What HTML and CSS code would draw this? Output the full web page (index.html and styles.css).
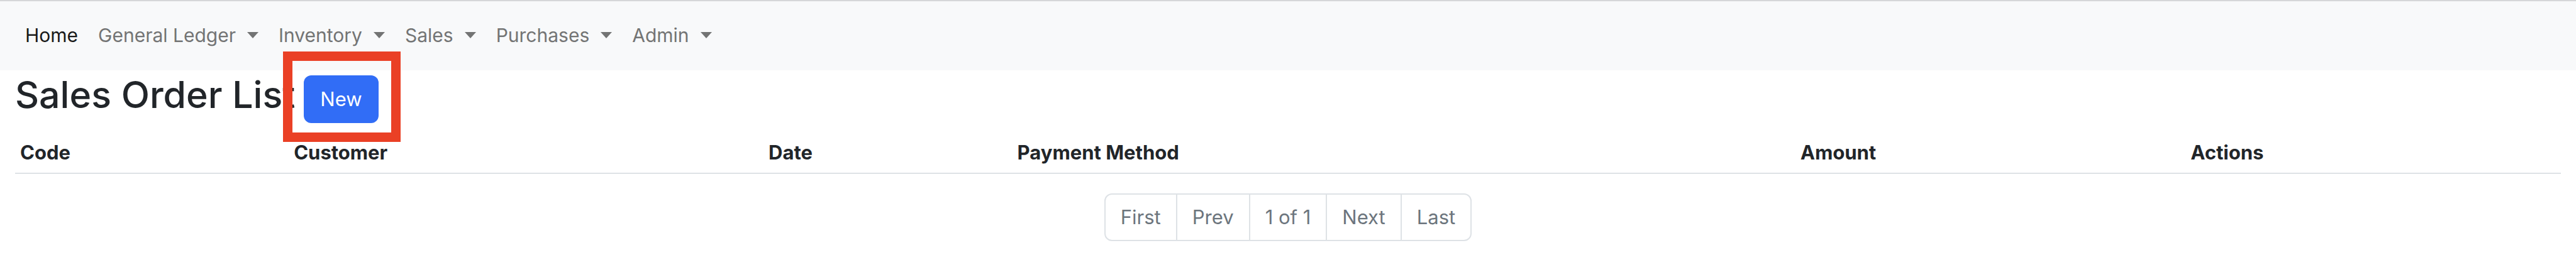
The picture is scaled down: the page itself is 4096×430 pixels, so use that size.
FILE: index.html
```html
<!DOCTYPE html>
<html lang="en">
<head>
<meta charset="utf-8">
<title>Sales Order List</title>
<link rel="stylesheet" href="styles.css">
</head>
<body>
<nav class="navbar">
  <ul class="nav-list">
    <li><a class="nav-link active" href="#">Home</a></li>
    <li><a class="nav-link dropdown" href="#">General Ledger</a></li>
    <li><a class="nav-link dropdown" href="#">Inventory</a></li>
    <li><a class="nav-link dropdown" href="#">Sales</a></li>
    <li><a class="nav-link dropdown" href="#">Purchases</a></li>
    <li><a class="nav-link dropdown" href="#">Admin</a></li>
  </ul>
</nav>
<main class="container">
  <div class="title-row">
    <h2 class="title">Sales Order List</h2>
    <div class="highlight"><button class="btn" type="button">New</button></div>
  </div>
  <table class="table">
    <thead>
      <tr>
        <th class="col-code" scope="col">Code</th>
        <th class="col-customer" scope="col">Customer</th>
        <th class="col-date" scope="col">Date</th>
        <th class="col-payment" scope="col">Payment Method</th>
        <th class="col-amount" scope="col">Amount</th>
        <th class="col-actions" scope="col">Actions</th>
      </tr>
    </thead>
  </table>
  <ul class="pagination">
    <li><a class="page-link" href="#">First</a></li>
    <li><a class="page-link" href="#">Prev</a></li>
    <li><a class="page-link" href="#">1 of 1</a></li>
    <li><a class="page-link" href="#">Next</a></li>
    <li><a class="page-link" href="#">Last</a></li>
  </ul>
</main>
</body>
</html>
```
FILE: styles.css
```css
* { box-sizing: border-box; }
body {
  margin: 0;
  background: #fff;
  color: #212529;
  font-family: Inter, "Liberation Sans", sans-serif;
  font-size: 31px;
  line-height: 48px;
}
.navbar {
  padding: 14px 24px 16px;
  border-top: 2px solid #d5d6d8;
  background: #f8f9fa;
  font-size: 30px;
}
.nav-list, .pagination {
  display: flex;
  margin: 0;
  padding: 0;
  list-style: none;
}
.nav-link {
  display: flex;
  align-items: center;
  gap: 18px;
  padding: 16px;
  color: #737474;
  text-decoration: none;
}
.nav-link.active { color: #191919; }
.dropdown::after {
  content: "";
  border-top: 10px solid;
  border-right: 9px solid transparent;
  border-left: 9px solid transparent;
}
.container { padding: 0 24px; }
.title-row {
  display: flex;
  align-items: flex-start;
  gap: 14px;
  padding-bottom: 15px;
}
.title {
  margin: 0;
  font-size: 59px;
  font-weight: 500;
  line-height: 78px;
}
.highlight {
  position: relative;
  padding-top: 8px;
}
.highlight::after {
  content: "";
  position: absolute;
  inset: -30px -35px -30px -33px;
  border: 15px solid #ea4025;
  pointer-events: none;
}
.btn {
  display: block;
  padding: 14px 26px;
  border: 0;
  border-radius: 12px;
  background: #316df6;
  color: #fff;
  font: inherit;
}
.table {
  width: 100%;
  table-layout: fixed;
  border-collapse: separate;
  border-spacing: 0;
}
.table th {
  padding: 8px;
  border-bottom: 2px solid #dee2e6;
  font-weight: 700;
  text-align: left;
}
.col-code { width: 10.75%; }
.col-customer { width: 18.65%; }
.col-date { width: 9.77%; }
.col-payment { width: 30.76%; }
.col-amount { width: 15.33%; }
.col-actions { width: 14.74%; }
.pagination {
  justify-content: center;
  margin-top: 31px;
}
.page-link {
  display: block;
  padding: 12px 24px;
  border: 2px solid #dee2e6;
  margin-left: -2px;
  color: #6c757d;
  text-decoration: none;
}
.pagination li:first-child .page-link {
  margin-left: 0;
  border-radius: 12px 0 0 12px;
}
.pagination li:last-child .page-link { border-radius: 0 12px 12px 0; }
```
